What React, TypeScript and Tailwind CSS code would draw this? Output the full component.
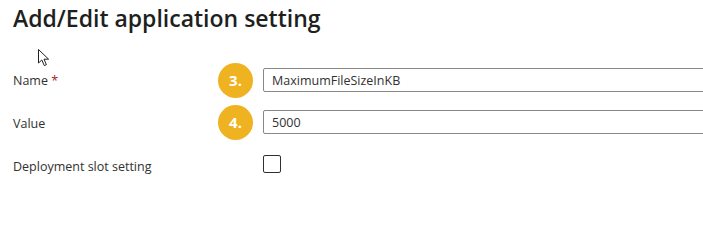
const Badge = ({ n }: { n: string }) => (
  <div className="flex h-[35px] w-[35px] shrink-0 items-center justify-center rounded-full bg-[#efb322] text-[15px] font-bold text-white">
    {n}
  </div>
);

const Cursor = () => (
  <svg
    className="absolute left-[37px] top-[48px]"
    width="16"
    height="20"
    viewBox="0 0 16 20"
  >
    <path
      d="M1.5 1.5 L1.5 15 L4.8 12 L7.3 17.6 L9.4 16.7 L7 11.2 L11.6 11.2 Z"
      fill="#fff"
      stroke="#222"
      strokeWidth="1"
      strokeLinejoin="round"
    />
  </svg>
);

export default function App() {
  return (
    <div
      className="relative h-[231px] w-[703px] overflow-hidden bg-white text-[#323130]"
      style={{ fontFamily: '"Open Sans", "Noto Sans", sans-serif' }}
    >
      <h1 className="pl-[13px] pt-[2px] text-[23px] font-semibold leading-[32px] text-[#201f1e]">
        Add/Edit application setting
      </h1>

      <Cursor />

      <div className="mt-[28px] flex flex-col pl-[13px]">
        {/* Name */}
        <div className="flex h-[36px] items-center">
          <div className="w-[205px] shrink-0 pt-[2px] text-[12.5px]">
            Name <span className="text-[#a4262c]">*</span>
          </div>
          <Badge n="3." />
          <input
            readOnly
            value="MaximumFileSizeInKB"
            className="ml-[10px] h-[24px] w-[460px] shrink-0 rounded-[2px] border border-[#8a8886] px-[8px] text-[12.5px] text-[#323130] outline-none"
          />
        </div>

        {/* Value */}
        <div className="mt-[6px] flex h-[36px] items-center">
          <div className="w-[205px] shrink-0 pt-[4px] text-[12.5px]">Value</div>
          <Badge n="4." />
          <input
            readOnly
            value="5000"
            className="ml-[10px] h-[24px] w-[460px] shrink-0 rounded-[2px] border border-[#8a8886] px-[8px] text-[12.5px] text-[#323130] outline-none"
          />
        </div>

        {/* Deployment slot */}
        <div className="mt-[9px] flex h-[30px] items-center">
          <div className="w-[250px] shrink-0 pt-[7px] text-[12.5px]">Deployment slot setting</div>
          <div className="h-[18px] w-[18px] shrink-0 rounded-[2px] border border-[#323130] bg-white" />
        </div>
      </div>
    </div>
  );
}
